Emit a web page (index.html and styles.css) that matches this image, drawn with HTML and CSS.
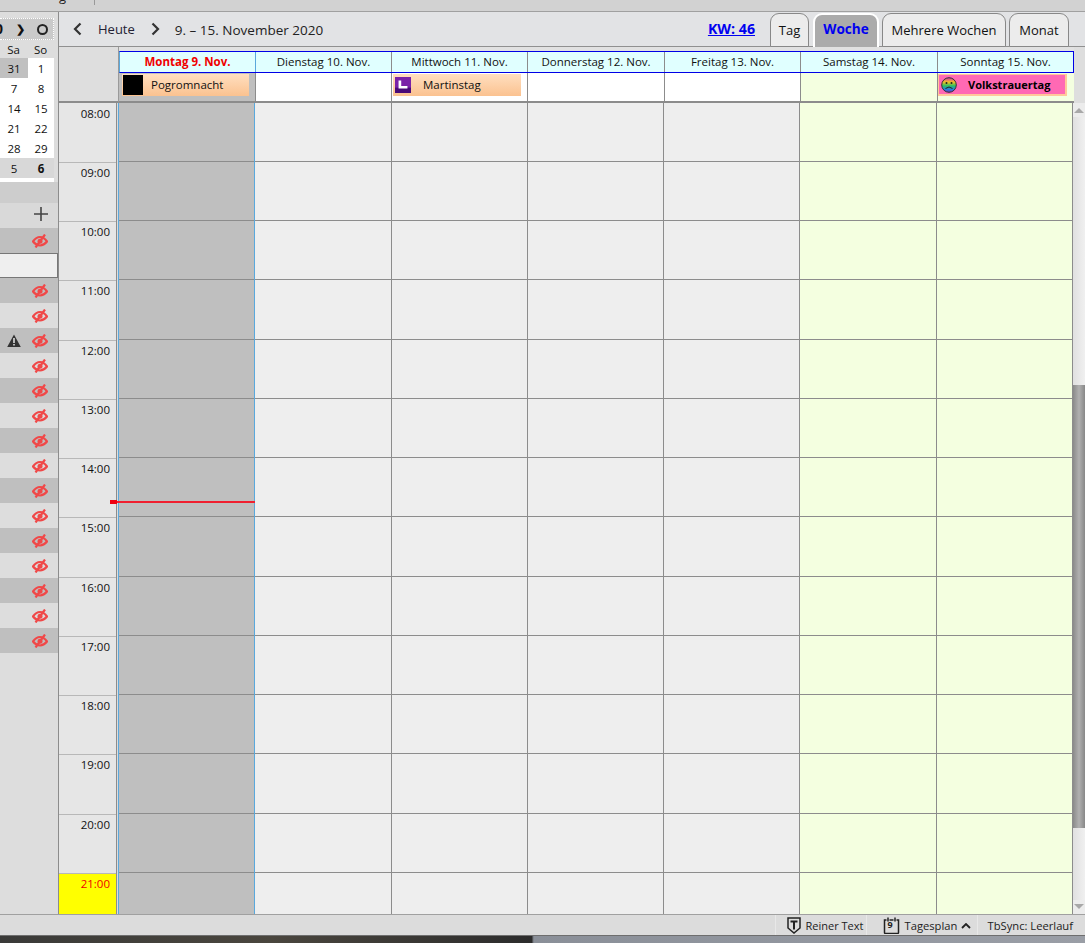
FILE: index.html
```html
<!DOCTYPE html>
<html lang="de">
<head>
<meta charset="utf-8">
<title>Kalender</title>
<link rel="stylesheet" href="styles.css">
</head>
<body>
<svg class="defs" width="0" height="0">
  <symbol id="eye" viewBox="0 0 16 14">
    <path d="M1 7.500C3.500 4 6 3 8 3s4.500 1 7 4.500C12.500 10.500 10 11.500 8 11.500S3.500 10.500 1 7.500Z" fill="none" stroke="currentColor" stroke-width="2.200"/>
    <circle cx="8" cy="7.300" r="2.500" fill="currentColor"/>
    <path d="M13 .5 3.500 13.500" stroke="currentColor" stroke-width="2.200"/>
  </symbol>
</svg>
<div class="topstrip"><span class="topstrip-g">g</span><span class="topstrip-div"></span></div>
<div class="main">
  <aside class="side">
    <div class="mini-nav"><span class="mini-zero">0</span><span class="mini-next">&#10095;</span><span class="mini-ring"></span></div>
    <div class="mini-dow"><span>Sa</span><span>So</span></div>
    <div class="mini-week"><span class="dim">31</span><span>1</span></div>
    <div class="mini-week"><span>7</span><span>8</span></div>
    <div class="mini-week"><span>14</span><span>15</span></div>
    <div class="mini-week"><span>21</span><span>22</span></div>
    <div class="mini-week"><span>28</span><span>29</span></div>
    <div class="mini-week grey"><span>5</span><span class="bold">6</span></div>
    <div class="mini-foot"></div>
    <div class="list-gap"></div>
    <div class="list-head"><svg width="14" height="14" viewBox="0 0 14 14"><path d="M7 0v14M0 7h14" stroke="#444" stroke-width="1.600"/></svg></div>
    <div class="row dark"><svg class="eye"><use href="#eye"/></svg></div>
    <div class="row input"></div>
    <div class="row dark"><svg class="eye"><use href="#eye"/></svg></div>
    <div class="row"><svg class="eye"><use href="#eye"/></svg></div>
    <div class="row dark"><svg class="warn" width="14" height="13" viewBox="0 0 14 13"><path d="M7 .5 13.800 13H.2Z" fill="#333"/><path d="M6.200 4h1.600v5H6.200zM6.200 10h1.600v1.600H6.200z" fill="#ddd"/></svg><svg class="eye"><use href="#eye"/></svg></div>
    <div class="row"><svg class="eye"><use href="#eye"/></svg></div>
    <div class="row dark"><svg class="eye"><use href="#eye"/></svg></div>
    <div class="row"><svg class="eye"><use href="#eye"/></svg></div>
    <div class="row dark"><svg class="eye"><use href="#eye"/></svg></div>
    <div class="row"><svg class="eye"><use href="#eye"/></svg></div>
    <div class="row dark"><svg class="eye"><use href="#eye"/></svg></div>
    <div class="row"><svg class="eye"><use href="#eye"/></svg></div>
    <div class="row dark"><svg class="eye"><use href="#eye"/></svg></div>
    <div class="row"><svg class="eye"><use href="#eye"/></svg></div>
    <div class="row dark"><svg class="eye"><use href="#eye"/></svg></div>
    <div class="row"><svg class="eye"><use href="#eye"/></svg></div>
    <div class="row dark"><svg class="eye"><use href="#eye"/></svg></div>
  </aside>
  <section class="cal">
    <div class="toolbar">
      <svg class="chev first" width="9" height="14" viewBox="0 0 9 14"><path d="M7.500 1.500 2 7l5.500 5.500" fill="none" stroke="#333" stroke-width="2.200"/></svg>
      <span class="today">Heute</span>
      <svg class="chev" width="9" height="14" viewBox="0 0 9 14"><path d="M1.500 1.500 7 7l-5.500 5.500" fill="none" stroke="#333" stroke-width="2.200"/></svg>
      <span class="range">9. – 15. November 2020</span>
      <a class="kw">KW: 46</a>
      <div class="tabs">
        <span class="tab t-day">Tag</span>
        <span class="tab active">Woche</span>
        <span class="tab t-multi">Mehrere Wochen</span>
        <span class="tab t-month">Monat</span>
      </div>
    </div>
    <div class="head">
      <div class="head-gutter"></div>
      <div class="head-days">
        <div class="day-names">
          <div class="dn today-name">Montag 9. Nov.</div>
          <div class="dn">Dienstag 10. Nov.</div>
          <div class="dn">Mittwoch 11. Nov.</div>
          <div class="dn w137">Donnerstag 12. Nov.</div>
          <div class="dn">Freitag 13. Nov.</div>
          <div class="dn w137">Samstag 14. Nov.</div>
          <div class="dn last">Sonntag 15. Nov.</div>
        </div>
        <div class="allday">
          <div class="ad w137 ad-mon"><div class="chip"><span class="chip-black"></span><span>Pogromnacht</span></div></div>
          <div class="ad"></div>
          <div class="ad ad-wed"><div class="chip chip-m"><svg width="16" height="16" viewBox="0 0 18 18"><rect width="18" height="18" fill="#7a22a8"/><rect y="12" width="18" height="6" fill="#4a0a78"/><path d="M4 4h3v6h7v3H4Z" fill="#fff"/></svg><span>Martinstag</span></div></div>
          <div class="ad w137"></div>
          <div class="ad"></div>
          <div class="ad w137 ad-we"></div>
          <div class="ad last ad-we"><div class="chip chip-v"><svg width="16" height="16" viewBox="0 0 16 16"><defs><linearGradient id="rb" x1="0" y1="0" x2="0" y2="1"><stop offset="0" stop-color="#d030b0"/><stop offset=".3" stop-color="#f5c020"/><stop offset=".55" stop-color="#30c060"/><stop offset=".8" stop-color="#2080e0"/><stop offset="1" stop-color="#8030c0"/></linearGradient></defs><circle cx="8" cy="8" r="7.300" fill="url(#rb)" stroke="#333"/><circle cx="5.500" cy="6" r="1" fill="#222"/><circle cx="10.500" cy="6" r="1" fill="#222"/><path d="M4.500 11.500Q8 8.500 11.500 11.500" fill="none" stroke="#222"/></svg><span>Volkstrauertag</span></div></div>
        </div>
      </div>
    </div>
    <div class="body">
      <div class="gutter">
        <div class="time">08:00</div><div class="time">09:00</div><div class="time">10:00</div><div class="time">11:00</div><div class="time">12:00</div><div class="time">13:00</div><div class="time">14:00</div><div class="time">15:00</div><div class="time">16:00</div><div class="time">17:00</div><div class="time">18:00</div><div class="time">19:00</div><div class="time">20:00</div><div class="time now">21:00</div>
      </div>
      <div class="grid">
        <div class="col col-today"><i></i><i></i><i></i><i></i><i></i><i></i><i></i><i></i><i></i><i></i><i></i><i></i><i></i><i></i></div>
        <div class="col w137"><i></i><i></i><i></i><i></i><i></i><i></i><i></i><i></i><i></i><i></i><i></i><i></i><i></i><i></i></div>
        <div class="col"><i></i><i></i><i></i><i></i><i></i><i></i><i></i><i></i><i></i><i></i><i></i><i></i><i></i><i></i></div>
        <div class="col"><i></i><i></i><i></i><i></i><i></i><i></i><i></i><i></i><i></i><i></i><i></i><i></i><i></i><i></i></div>
        <div class="col"><i></i><i></i><i></i><i></i><i></i><i></i><i></i><i></i><i></i><i></i><i></i><i></i><i></i><i></i></div>
        <div class="col w137 col-we"><i></i><i></i><i></i><i></i><i></i><i></i><i></i><i></i><i></i><i></i><i></i><i></i><i></i><i></i></div>
        <div class="col col-we"><i></i><i></i><i></i><i></i><i></i><i></i><i></i><i></i><i></i><i></i><i></i><i></i><i></i><i></i></div>
        <div class="nowline"></div>
      </div>
      <div class="scroll">
        <span class="arrow up"></span>
        <span class="track t1"></span>
        <span class="thumb"></span>
        <span class="track t2"></span>
        <span class="arrow down"></span>
      </div>
    </div>
  </section>
</div>
<footer class="status">
  <span class="st st-text"><svg width="14" height="17" viewBox="0 0 14 17"><path d="M1 1h12v10l-6 5-6-5Z" fill="none" stroke="#222" stroke-width="1.500"/><path d="M3.500 3.500h7v2H8v7H6v-7H3.500Z" fill="#222"/></svg>Reiner Text</span>
  <span class="st st-plan"><svg width="17" height="17" viewBox="0 0 17 17"><path d="M3.500 3H1.500v12.500q0 1 1 1h12q1 0 1-1V3h-2M6.500 3h4" fill="none" stroke="#222" stroke-width="1.500"/><path d="M5 .5v4M12 .5v4" stroke="#222" stroke-width="1.500"/></svg><b class="nine">9</b>Tagesplan<svg class="caret" width="10" height="6" viewBox="0 0 10 6"><path d="M1 5l4-4 4 4" fill="none" stroke="#222" stroke-width="1.800"/></svg></span>
  <span class="st st-sync">TbSync: Leerlauf</span>
</footer>
<div class="photo"></div>
</body>
</html>
```

FILE: styles.css
```css
* { box-sizing: border-box; }
html, body { margin: 0; height: 100%; }
body {
  width: 1085px; height: 943px; overflow: hidden;
  display: flex; flex-direction: column;
  font: 11.5px/16px "Open Sans", "Noto Sans", sans-serif;
  color: #111; background: #dcdcdc;
}
.defs { display: block; height: 0; }

.topstrip { height: 12px; flex: none; background: #d2d2d2; border-bottom: 1px solid #a0a0a0; display: flex; overflow: hidden; }
.topstrip-g { margin: -12px 0 0 59px; height: 16px; font-size: 13px; color: #222; }
.topstrip-div { width: 1px; height: 5px; margin-left: 28px; background: #999; }

.main { flex: none; height: 902px; display: flex; }

/* sidebar */
.side { flex: none; width: 59px; border-right: 1px solid #8c8c8c; background: #dddddd; display: flex; flex-direction: column; }
.mini-nav { height: 22px; margin: 6px 4px 0 0; background: #cacaca; border: 1px dotted #fff; border-left: 0; display: flex; align-items: center; font-size: 14px; font-weight: 700; }
.mini-zero { margin-left: -5px; width: 9px; overflow: hidden; }
.mini-next { margin-left: 12px; font-size: 11px; }
.mini-ring { width: 11px; height: 11px; margin-left: 12px; border: 2.5px solid #222; border-radius: 50%; }
.mini-dow { height: 18px; padding-right: 4px; display: grid; grid-template-columns: 27px 27px; text-align: center; line-height: 20px; }
.mini-week { height: 20px; width: 54px; display: grid; grid-template-columns: 28px 26px; text-align: center; line-height: 22px; background: #fff; }
.mini-week.grey { background: #d8d8d8; }
.mini-foot { height: 4px; width: 54px; background: #fff; }
.list-gap { height: 21px; background: #cdcdcd; }
.dim { background: #c0c0c0; }
.bold { font-weight: 700; }
.list-head { height: 25px; padding: 0 10px 3px 0; display: flex; align-items: center; justify-content: flex-end; background: #d9d9d9; }
.row { height: 25px; padding-right: 10px; display: flex; align-items: center; justify-content: flex-end; background: #dddddd; }
.row.dark { background: #bfbfbf; }
.row.input { background: #efefef; border: 1px solid #777; border-left: 0; }
.eye { width: 16px; height: 14px; color: #f04848; }
.warn { margin-right: 11px; margin-left: -1px; }

/* calendar */
.cal { flex: 1; min-width: 0; display: flex; flex-direction: column; }
.toolbar { height: 35px; flex: none; display: flex; align-items: center; background: #e2e3e5; border-bottom: 1px solid #909090; padding-right: 16px; font-size: 13px; }
.chev.first { margin-left: 14px; }
.today { margin: 0 16px 0 16px; color: #223; }
.range { margin: 2px 0 0 15px; color: #222; font-size: 13.500px; }
.kw { margin-left: auto; color: #0000f0; font-weight: 700; text-decoration: underline; font-size: 14.200px; }
.tabs { display: flex; align-self: flex-end; margin-left: 15px; margin-bottom: -1px; gap: 3px; }
.tab { height: 34px; border: 1px solid #888; border-radius: 9px 9px 0 0; background: #ececec; display: flex; align-items: center; justify-content: center; font-size: 13px; }
.t-day { width: 39px; margin-right: 1px; }
.active { width: 66px; padding-bottom: 4px; background: #ababab; border: 2px solid #fff; border-bottom: 0; color: #0000f0; font-weight: 700; font-size: 13.600px; }
.t-multi { width: 124px; }
.t-month { width: 60px; }

.head { height: 56px; flex: none; display: flex; background: #dedede; }
.head-gutter { width: 60px; flex: none; border-right: 1px solid #9a9a9a; border-bottom: 2px solid #8c8c8c; }
.head-days { flex: none; width: 955px; padding-top: 4px; background: #e1e1e1; border-bottom: 2px solid #8c8c8c; }
.day-names { height: 22px; display: flex; background: #e0ffff; border: 1px solid #0000e6; border-left-color: #5aa8dc; }
.dn { width: 136px; text-align: center; border-right: 1px solid #8c8c8c; line-height: 19px; }
.today-name { color: #f00000; font-weight: 700; border-color: #5aa8dc; }
.dn.w137, .ad.w137, .col.w137 { width: 137px; }
.dn.last { flex: 1; border-right: 0; }
.allday { height: 28px; display: flex; background: #fff; }
.ad { width: 136px; border-right: 1px solid #8c8c8c; padding: 1px 6px 0 3px; }
.ad.last { flex: 1; border-right: 0; padding-left: 0; padding-right: 7px; }
.ad-mon { background: #bfbfbf; }
.ad-wed { padding-left: 1px; }
.ad-we { background: #f4ffe0; }
.chip { height: 22px; display: flex; align-items: center; background: linear-gradient(#ffdfc0, #fbc290); padding-left: 1px; gap: 8px; }
.chip-black { width: 20px; height: 20px; background: #000; }
.chip-m { padding-left: 2px; gap: 12px; }
.chip-v { background: #ff69b4; border: 2px solid #ffc89a; border-width: 1px 2px 2px 1px; padding-left: 2px; font-weight: 700; font-size: 11px; gap: 11px; color: #000; }

.body { flex: 1; min-height: 0; display: flex; overflow: hidden; }
.gutter { width: 58px; flex: none; background: #e6e6e6; border-right: 1px solid #8c8c8c; }
.time { height: 59.25px; padding: 2px 6px 0 0; text-align: right; border-bottom: 1px solid #b8b8b8; }
.time:first-child { margin-top: .7px; }
.time.now { background: #ff0; color: #f00000; }
.grid { flex: none; width: 955px; margin-left: 1px; display: flex; position: relative; }
.col { width: 136px; flex: none; background: #eeeeee; border-right: 1px solid #8c8c8c; display: flex; flex-direction: column; }
.col i { display: block; flex: none; height: 59.25px; border-bottom: 1px solid #8c8c8c; }
.col i:first-child { height: 58.950px; }
.col-today { width: 137px; background: #bfbfbf; border-left: 1px solid #5aa8dc; border-right-color: #5aa8dc; }
.col-we { background: #f4ffe0; }
.nowline { position: absolute; left: -8px; top: 398px; width: 145px; height: 2px; background: #f02030; }
.nowline::before { content: ""; position: absolute; left: 0; top: -1px; width: 7px; height: 4px; background: #f00010; }
.scroll { flex: 1; display: flex; flex-direction: column; background: #ececec; }
.arrow { height: 14px; flex: none; position: relative; }
.arrow::after { content: ""; position: absolute; left: 1px; width: 0; height: 0; border: 5px solid transparent; }
.arrow.up::after { top: 0; border-bottom-color: #a8a8a8; }
.arrow.down::after { bottom: 0; border-top-color: #a8a8a8; }
.track { flex: none; background: linear-gradient(90deg, #e0e0e0, #f0f0f0); }
.t1 { height: 268px; }
.thumb { height: 443px; flex: none; background: linear-gradient(90deg, #8a8a8a, #b0b0b0 50%, #888); }
.t2 { flex: 1; }

.status { height: 22px; flex: none; background: #dcdcdc; border-top: 1px solid #a0a0a0; display: flex; align-items: center; justify-content: flex-end; padding-right: 12px; border-bottom: 1px solid #6e6e6e; font-size: 11.200px; }
.st { display: flex; align-items: center; height: 100%; padding-top: 1px; color: #222; position: relative; }
.st-text { gap: 5px; width: 91px; padding-left: 11px; border-left: 1px solid #e8e8e8; font-size: 11px; }
.st-plan { gap: 5px; width: 111px; padding-left: 16px; border-left: 1px solid #e8e8e8; }
.nine { position: absolute; left: 21px; top: 4px; font-size: 9px; font-weight: 700; line-height: 12px; }
.caret { margin-left: -1px; }
.st-sync { padding-left: 10px; border-left: 1px solid #e8e8e8; }

.photo { flex: 1; background: linear-gradient(90deg, #3a3a38 0, #4a463e 25%, #2c2c2c 49%, #8a8f98 49.200%, #9a9ea6 100%); }
```
